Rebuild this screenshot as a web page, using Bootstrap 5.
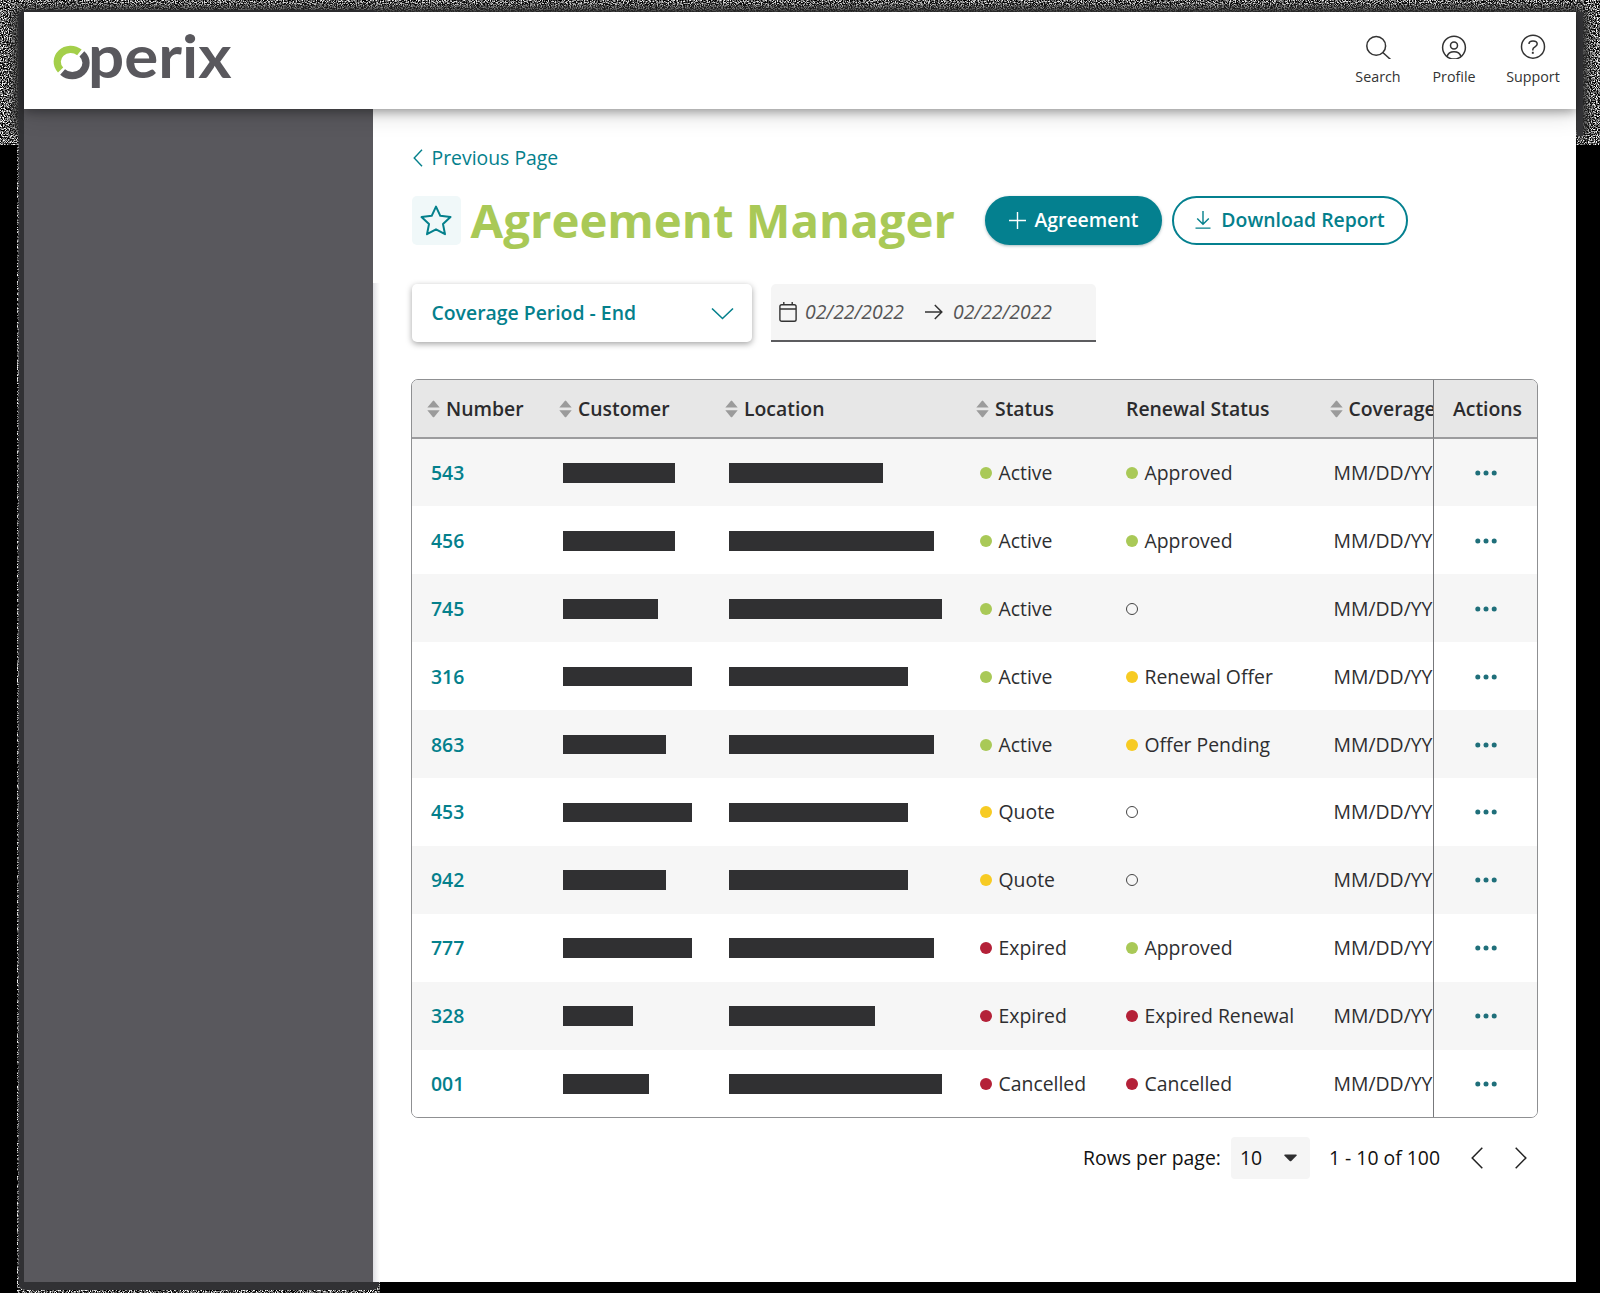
<!DOCTYPE html>
<html lang="en">
<head>
<meta charset="utf-8">
<title>Agreement Manager</title>
<link href="https://cdn.jsdelivr.net/npm/bootstrap@5.3.0/dist/css/bootstrap.min.css" rel="stylesheet">
<style>
body{background:#000;width:1600px;height:1293px;overflow:hidden;font-family:"Open Sans","Noto Sans",sans-serif;font-size:19.4px;line-height:28px;color:#2e2e30;padding:12px 24px 11px}
svg{display:block;flex:none}
.grain{left:0;top:0;z-index:0}
.app-window{height:1270px;z-index:1}
.topbar{height:97px;background:#fff;box-shadow:0 3px 9px rgba(0,0,0,.3),0 5px 22px rgba(0,0,0,.17);z-index:2;padding:0 15px 0 28px!important}
.tool{color:#333;font-size:14.3px;line-height:20px;text-decoration:none}
.tool svg{margin-bottom:8px}
.side{width:349px;background:#59585d}
.content-pane{background:#fff;padding:35px 38px 0 39px;min-width:0}
.side-shadow{left:349px;top:174px;width:7px;bottom:0;background:linear-gradient(90deg,#dfdfe3,#f4f4f6 60%,#fff)}
.teal{color:#04808c}
.back{height:28px;gap:8.5px;padding-left:1px}
.title-row{height:49px;margin-top:24px}
.star-box{width:48.5px;height:49px;background:#f0f8f9;border-radius:5px}
.page-title{font-size:47.35px;line-height:49px;font-weight:700;color:#a9c957;margin:-2px 0 0 10px;width:514.5px;white-space:nowrap}
.pill{height:49px;border-radius:25px;font-size:19.4px;font-weight:600;border:2px solid #04808f;padding:0 0 1px;white-space:nowrap}
.pill-fill{background:#04808f;color:#fff;width:177px;box-shadow:0 1px 3px rgba(0,60,70,.35)}
.pill-line{background:#fff;color:#04808c;width:236px}
.filters{margin-top:39px;height:58px}
.period{width:340px;height:58px;border-radius:5px;background:#fff;box-shadow:0 2px 6px rgba(0,0,0,.36);font-weight:600;padding:0 18px 0 19.5px}
.dates{width:325px;height:58px;background:#f5f5f5;border-radius:5px 5px 0 0;border-bottom:2px solid #5c5c5f;font-style:italic;color:#555;padding:0 0 1px 8px}
.grid-box{margin-top:37px;margin-left:-1px;width:1127px;height:738.5px;border:1.4px solid #8f9092;border-radius:7px;overflow:hidden}
.agreements{table-layout:fixed;width:1125px;margin:0;border-collapse:separate;border-spacing:0;color:#2e2e30}
.agreements th,.agreements td{padding:1px 0 0 19px;border:0;vertical-align:middle;white-space:nowrap;overflow:hidden;box-shadow:none}
.agreements th{height:58.5px;padding-top:2px;background:#e7e7e7;border-bottom:2px solid #9c9c9e;font-weight:600;color:#2b2b2d}
.agreements th.sortable{padding-left:15px}
.agreements td{height:67.9px;background:#fff}
.agreements tbody tr:nth-child(odd) td{background:#f6f6f6}
.agreements tr>:last-child{border-left:1.4px solid #77787b;padding-left:0;text-align:center}
.agreements th:last-child{padding-left:4px}
.num{color:#04808c;font-weight:600;text-decoration:none}
.redact{height:19.6px;background:#303032}
.dot{width:12px;height:12px;border-radius:50%;flex:none}
.dot-g{background:#a9c957}.dot-y{background:#f7cb23}.dot-r{background:#b42138}
.dot-o{border:1px solid #444}
.pager{margin-top:19px;height:43px;color:#111}
.pager-size{width:79px;height:42px;background:#f5f5f5;border-radius:4px;margin-left:10px;margin-right:19px;padding:0 13px 0 9px}
</style>
</head>
<body>
<svg class="grain position-absolute" width="1600" height="1293" aria-hidden="true">
  <defs>
    <filter id="speckle" x="0" y="0" width="100%" height="100%" color-interpolation-filters="sRGB">
      <feTurbulence type="fractalNoise" baseFrequency=".85" numOctaves="3" seed="8"/>
      <feColorMatrix values="3.6 0 0 0 -1.45  3.6 0 0 0 -1.45  3.6 0 0 0 -1.45  0 0 0 0 1"/>
    </filter>
    <filter id="soft" x="-5%" y="-20%" width="110%" height="140%"><feGaussianBlur stdDeviation="4"/></filter>
  </defs>
  <rect width="1600" height="145" filter="url(#speckle)"/>
  <rect x="14" y="7" width="1573" height="129" rx="8" fill="#303033" filter="url(#soft)"/>
  <rect x="0" y="145" width="1600" height="30" fill="#000"/>
  <rect x="17" y="140" width="363" height="1153" filter="url(#speckle)"/>
  <rect x="18.5" y="10" width="361" height="1280" rx="7" fill="#313134"/>
  <rect x="1577" y="12" width="6" height="124" fill="#353538"/>
  <rect x="1576" y="145" width="24" height="1148" fill="#000"/>
</svg>

<div class="app-window position-relative d-flex flex-column">
  <header class="topbar navbar position-relative flex-shrink-0 flex-nowrap align-items-start">
    <svg width="200" height="88" viewBox="52 12 200 88" role="img" aria-label="operix">
      <g fill="none" stroke-width="7.2">
        <path d="M60.6 70A13.400 12.400 0 0 1 79.4 52.400" stroke="#a4cf4a"/>
        <path d="M81.900 53.800A13.400 12.400 0 0 1 62.600 72" stroke="#59585d"/>
      </g>
      <text x="88" y="77.600" textLength="143.500" lengthAdjust="spacingAndGlyphs" font-family="Lato" font-weight="700" font-size="60" fill="#59585d">perix</text>
    </svg>
    <nav class="d-flex" style="padding-top:19px">
      <a class="tool d-flex flex-column align-items-center" style="width:46px" href="#">
        <svg width="28" height="28" viewBox="0 0 28 28" fill="none" stroke="#333" stroke-width="1.5"><circle cx="12.2" cy="14.9" r="9.4"/><path d="M18.800 21.500l7.800 7"/></svg>Search</a>
      <a class="tool d-flex flex-column align-items-center" style="width:46px;margin-left:30px" href="#">
        <svg width="28" height="28" viewBox="0 0 28 28" fill="none" stroke="#333" stroke-width="1.5"><circle cx="14" cy="16.600" r="11.400"/><circle cx="14" cy="14.400" r="3.500"/><path d="M7 25.500c1-3.300 3.500-4.800 7-4.800s6 1.500 7 4.800"/></svg>Profile</a>
      <a class="tool d-flex flex-column align-items-center" style="width:56px;margin-left:28px" href="#">
        <svg width="28" height="28" viewBox="0 0 28 28" fill="none" stroke="#333" stroke-width="1.5"><circle cx="14" cy="15.700" r="11.500"/><path d="M10 13c0-2 1.600-3 4-3s4.200 1.100 4.200 3.100c0 3-4.400 2.600-4.400 5.600v.8"/><path d="M13.800 20.800v2" stroke-width="1.900"/></svg>Support</a>
    </nav>
  </header>

  <div class="d-flex flex-grow-1 position-relative">
    <aside class="side flex-shrink-0"></aside>
    <main class="content-pane flex-grow-1">
      <a class="back d-flex align-items-center teal text-decoration-none" href="#">
        <svg width="10" height="18" viewBox="0 0 10 18" fill="none" stroke="#04808c" stroke-width="1.4"><path d="M9 .7L1.200 9 9 17.300"/></svg>Previous Page</a>

      <div class="title-row d-flex align-items-center">
        <span class="star-box d-flex align-items-center justify-content-center">
          <svg width="32" height="31" viewBox="0 0 32 31" fill="none" stroke="#04808c" stroke-width="2" stroke-linejoin="round"><path d="M16 1.600l4.300 9.200 10.200 1.300-7.500 7 2 10.100L16 24.300 7 29.200l2-10.100-7.500-7 10.200-1.300z"/></svg>
        </span>
        <h1 class="page-title">Agreement Manager</h1>
        <button class="pill pill-fill btn d-flex align-items-center justify-content-center" style="gap:9px">
          <svg width="17" height="17" viewBox="0 0 17 17" stroke="#fff" stroke-width="1.400"><path d="M8.500 0v17M0 8.500h17"/></svg>Agreement</button>
        <button class="pill pill-line btn d-flex align-items-center justify-content-center" style="gap:10px;margin-left:10px">
          <svg width="16" height="18" viewBox="0 0 16 18" fill="none" stroke="#04808c" stroke-width="1.400"><path d="M8 0v13M2.200 7.500L8 13.300l5.800-5.800M.5 17.100h15"/></svg>Download Report</button>
      </div>

      <div class="filters d-flex" style="gap:19px">
        <div class="period d-flex align-items-center justify-content-between teal">Coverage Period - End
          <svg width="23" height="13" viewBox="0 0 23 13" fill="none" stroke="#04808c" stroke-width="1.600"><path d="M1 1.500l10.500 10L22 1.500"/></svg></div>
        <div class="dates d-flex align-items-center">
          <svg width="18" height="20" viewBox="0 0 18 20" fill="none" stroke="#333" stroke-width="1.400"><rect x=".9" y="2.700" width="16.200" height="16.500" rx="1.800"/><path d="M1 7h16M4.800 0v3M13.200 0v3"/></svg>
          <span style="margin-left:8px;width:120px">02/22/2022</span>
          <svg width="18" height="16" viewBox="0 0 18 16" fill="none" stroke="#333" stroke-width="1.500"><path d="M0 8h16.500M9.800 1l7 7-7 7"/></svg>
          <span style="margin-left:10px">02/22/2022</span>
        </div>
      </div>

      <div class="grid-box">
        <table class="agreements table">
          <colgroup><col style="width:132px"><col style="width:166px"><col style="width:251px"><col style="width:146px"><col style="width:207.5px"><col style="width:118.5px"><col style="width:104px"></colgroup>
          <thead><tr id="heads"></tr></thead>
          <tbody id="rows"></tbody>
        </table>
      </div>

      <div class="pager d-flex align-items-center justify-content-end">
        <span>Rows per page:</span>
        <span class="pager-size d-flex align-items-center justify-content-between">10
          <svg width="13" height="8" viewBox="0 0 13 8" fill="#2e2e30"><path d="M1 .5h11c.8 0 1 .8.500 1.300L7.300 7a1.200 1.200 0 0 1-1.600 0L.5 1.800C0 1.300.2.5 1 .5z"/></svg></span>
        <span>1 - 10 of 100</span>
        <svg style="margin-left:30.5px" width="12" height="22" viewBox="0 0 12 22" fill="none" stroke="#222" stroke-width="1.500"><path d="M11.300.8L1.200 11l10.100 10.200"/></svg>
        <svg style="margin-left:32px;margin-right:11.5px" width="12" height="22" viewBox="0 0 12 22" fill="none" stroke="#222" stroke-width="1.500"><path d="M.7.8L10.800 11 .7 21.200"/></svg>
      </div>
    </main>
    <div class="side-shadow position-absolute"></div>
  </div>
</div>

<script>
const sortIcon='<svg width="13" height="18" viewBox="0 0 13 18" fill="#9b9b9b"><path d="M.3 7.600L5.800 1a.9.9 0 0 1 1.400 0l5.500 6.600zM.3 10.200L5.800 16.900a.9.9 0 0 0 1.400 0l5.500-6.700z"/></svg>';
document.getElementById('heads').innerHTML=[['Number',1],['Customer',1],['Location',1],['Status',1],['Renewal Status',0],['Coverage',1],['Actions',0]]
  .map(([t,s])=>s?`<th class="sortable"><div class="d-flex align-items-center" style="gap:6px">${sortIcon}${t}</div></th>`:`<th>${t}</th>`).join('');
const data=[
['543',112,154,'g','Active','g','Approved'],
['456',112,204.5,'g','Active','g','Approved'],
['745',94.5,213,'g','Active','o',''],
['316',128.5,179,'g','Active','y','Renewal Offer'],
['863',103,204.5,'g','Active','y','Offer Pending'],
['453',128.5,179,'y','Quote','o',''],
['942',103,179,'y','Quote','o',''],
['777',128.5,204.5,'r','Expired','g','Approved'],
['328',69.5,145.5,'r','Expired','r','Expired Renewal'],
['001',86,213,'r','Cancelled','r','Cancelled']];
const state=(c,t)=>`<div class="d-flex align-items-center" style="gap:6.5px"><i class="dot dot-${c}"></i>${t}</div>`;
const more='<svg class="mx-auto" width="22" height="6" fill="#1f6f7a"><circle cx="2.800" cy="3" r="2.500"/><circle cx="11" cy="3" r="2.500"/><circle cx="19.200" cy="3" r="2.500"/></svg>';
document.getElementById('rows').innerHTML=data.map(r=>`<tr><td><a class="num" href="#">${r[0]}</a></td><td><div class="redact" style="width:${r[1]}px"></div></td><td><div class="redact" style="width:${r[2]}px"></div></td><td>${state(r[3],r[4])}</td><td>${state(r[5],r[6])}</td><td>MM/DD/YY</td><td>${more}</td></tr>`).join('');
</script>
<script src="https://cdn.jsdelivr.net/npm/bootstrap@5.3.0/dist/js/bootstrap.bundle.min.js"></script>
</body>
</html>
